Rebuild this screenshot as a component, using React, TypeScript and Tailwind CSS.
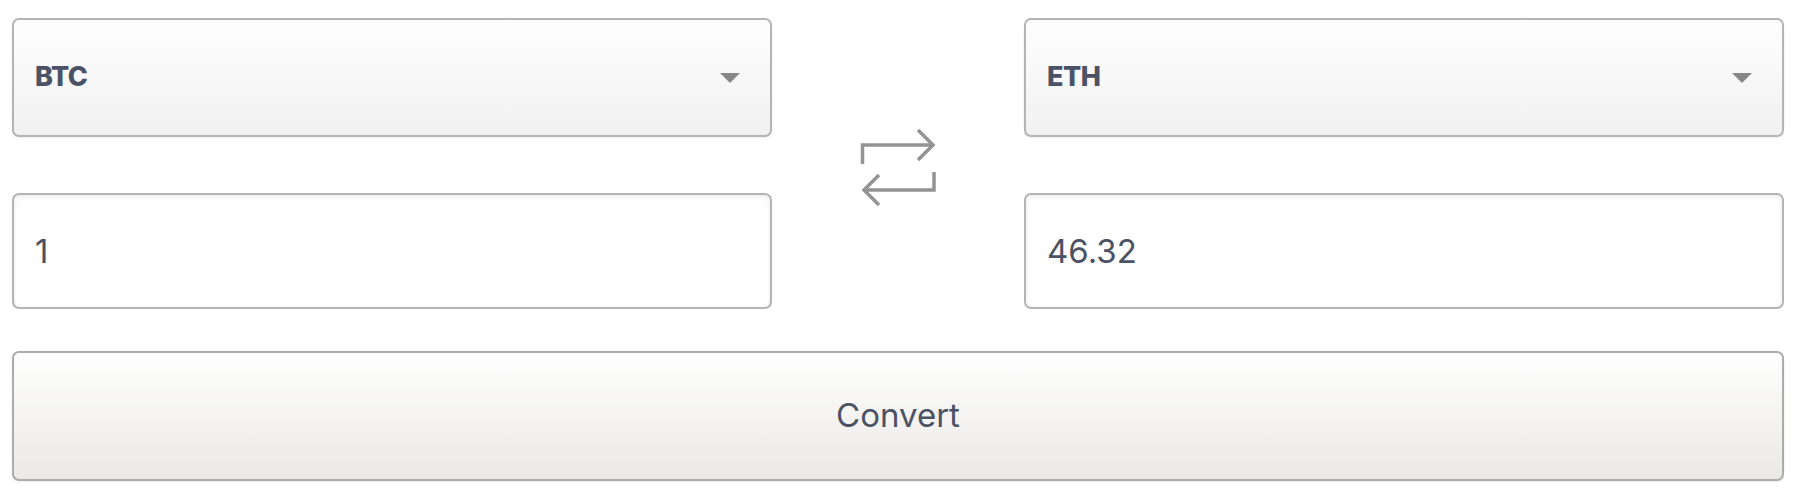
import { useState } from "react";

const font = "font-['Inter','Liberation_Sans',sans-serif]";

function Caret() {
  return (
    <svg width="20" height="10" viewBox="0 0 20 10" className="shrink-0">
      <polygon points="0,0 20,0 10,10" fill="#878787" />
    </svg>
  );
}

function CoinSelect({ value }: { value: string }) {
  return (
    <button
      type="button"
      className="flex h-full w-full items-center justify-between rounded-[7px] border-2 border-[#b4b4b4] bg-gradient-to-b from-[#fefefe] to-[#f1f1f1] pl-[21px] pr-[30px] shadow-[0_1px_2px_rgba(0,0,0,0.08)]"
    >
      <span className="text-[27px] font-extrabold tracking-[-0.5px] text-[#4b5265]">
        {value}
      </span>
      <Caret />
    </button>
  );
}

function AmountInput({ value }: { value: string }) {
  return (
    <input
      type="text"
      defaultValue={value}
      className="h-full w-full rounded-[7px] border-2 border-[#b4b4b4] bg-white pl-[21px] text-[33px] text-[#4b5265] shadow-[inset_0_2px_5px_rgba(0,0,0,0.08)] outline-none"
    />
  );
}

function SwapIcon() {
  return (
    <svg width="80" height="80" viewBox="0 0 80 80" fill="none" stroke="#939393" strokeWidth="3.5">
      <path d="M4.5 36 V17 H75" />
      <path d="M60 2 L75 17 L60 32" />
      <path d="M76 44 V62 H6" />
      <path d="M21 47 L6 62 L21 77" />
    </svg>
  );
}

export default function App() {
  const [from] = useState("BTC");
  const [to] = useState("ETH");

  return (
    <div className={`${font} min-h-[500px] bg-white pl-3 pt-[18px]`}>
      <div className="w-[1772px]">
        <div className="grid grid-cols-[760px_252px_760px] grid-rows-[119px_116px] gap-y-[56px]">
          <CoinSelect value={from} />
          <div className="row-span-2 flex items-center justify-center pt-2">
            <SwapIcon />
          </div>
          <CoinSelect value={to} />
          <AmountInput value="1" />
          <AmountInput value="46.32" />
        </div>

        <button
          type="button"
          className="mt-[42px] flex h-[130px] w-full items-center justify-center rounded-[7px] border-2 border-[#ababab] bg-gradient-to-b from-[#fefefe] to-[#eae9e6] text-[33px] text-[#4b5265] shadow-[0_1px_2px_rgba(0,0,0,0.08)]"
        >
          Convert
        </button>
      </div>
    </div>
  );
}
